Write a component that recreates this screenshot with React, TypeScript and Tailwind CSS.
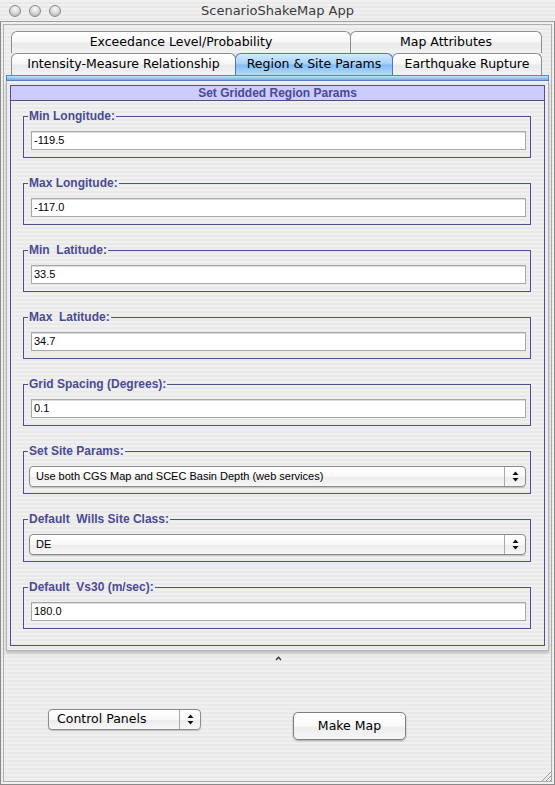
import React from 'react';

const stripe =
  'bg-[repeating-linear-gradient(180deg,#f0f0f0_0px,#f0f0f0_2px,#e9e9e9_2px,#e9e9e9_4px)]';

const Arrows: React.FC = () => (
  <svg width="7" height="11" viewBox="0 0 7 11">
    <polygon points="3.5,0.5 6.5,4 0.5,4" fill="#111" />
    <polygon points="0.5,7 6.5,7 3.5,10.5" fill="#111" />
  </svg>
);

const Tab: React.FC<{ label: string; w: string; selected?: boolean }> = ({ label, w, selected }) => (
  <div
    className={`${w} h-[22px] -ml-px first:ml-0 flex items-center justify-center rounded-t-[6px] border border-b-0 text-[12.5px] text-black font-['DejaVu_Sans',sans-serif] ${
      selected
        ? 'relative z-10 border-[#4a79bd] bg-[linear-gradient(180deg,#d3eafe_0%,#a5d0f8_48%,#7fbbf2_52%,#b5dbfc_100%)]'
        : 'border-[#8e8e8e] bg-[linear-gradient(180deg,#ffffff_0%,#f7f7f7_48%,#e9e9e9_52%,#f2f2f2_100%)]'
    }`}
  >
    {label}
  </div>
);

const TextRow: React.FC<{ label: string; value: string }> = ({ label, value }) => (
  <fieldset className="border border-[#4f4f8f] pl-[4px] pr-[4px] pt-[8px] pb-[7px] mx-0">
    <legend className="px-[1px] text-[12px] leading-[14px] font-bold text-[#4b4b93] whitespace-pre font-['Liberation_Sans',sans-serif]">
      {label}
    </legend>
    <div className="ml-[3px] h-[19px] bg-white border border-[#a8a8a8] shadow-[inset_0_1px_0_#dcdcdc] flex items-center pl-[2px] text-[11px] text-black font-['Liberation_Sans',sans-serif]">
      {value}
    </div>
  </fieldset>
);

const SelectRow: React.FC<{ label: string; value: string }> = ({ label, value }) => (
  <fieldset className="border border-[#4f4f8f] pl-[4px] pr-[4px] pt-[8px] pb-[6px] mx-0">
    <legend className="px-[1px] text-[12px] leading-[14px] font-bold text-[#4b4b93] whitespace-pre font-['Liberation_Sans',sans-serif]">
      {label}
    </legend>
    <div className="ml-[1px] h-[21px] flex rounded-[4px] border border-[#8c8c8c] shadow-[0_1px_1px_rgba(0,0,0,0.18)] bg-[linear-gradient(180deg,#ffffff_0%,#f8f8f8_50%,#ececec_55%,#f7f7f7_100%)] overflow-hidden">
      <div className="flex-1 flex items-center pl-[6px] text-[11px] text-black font-['Liberation_Sans',sans-serif]">
        {value}
      </div>
      <div className="w-[21px] border-l border-[#a9a9a9] flex items-center justify-center">
        <Arrows />
      </div>
    </div>
  </fieldset>
);

const App: React.FC = () => {
  return (
    <div className="relative w-[555px] h-[785px] bg-[#e9e9e9] flex flex-col overflow-hidden">
      {/* title bar */}
      <div className={`h-[22px] relative flex items-center border-b border-[#9d9d9d] ${stripe}`}>
        <div className="absolute left-[9px] top-[5px] flex gap-[8px]">
          {[0, 1, 2].map((i) => (
            <div
              key={i}
              className="w-[12px] h-[12px] rounded-full border border-[#8b8b8b] bg-[radial-gradient(circle_at_50%_30%,#fbfbfb_0%,#dcdcdc_45%,#a9a9a9_100%)]"
            />
          ))}
        </div>
        <div className="flex-1 text-center text-[13px] text-[#3c3c3c] font-['DejaVu_Sans',sans-serif]">
          ScenarioShakeMap App
        </div>
      </div>

      {/* window body */}
      <div className={`flex-1 border-x border-b border-[#8a8a8a] p-[2px] ${stripe}`}>
        <div className="h-full border border-[#b0b0b0] flex flex-col">
          <div className="px-[2px] pt-[6px]">
            {/* tabs */}
            <div className="px-[5px]">
              <div className="flex">
                <Tab label="Exceedance Level/Probability" w="w-[340px]" />
                <Tab label="Map Attributes" w="w-[192px]" />
              </div>
              <div className="flex">
                <Tab label="Intensity-Measure Relationship" w="w-[225px]" />
                <Tab label="Region & Site Params" w="w-[158px]" selected />
                <Tab label="Earthquake Rupture" w="w-[150px]" />
              </div>
            </div>
            <div className="h-[6px] border border-[#5286c6] bg-[linear-gradient(180deg,#c9e4fb_0%,#98c9f3_50%,#6eaeea_100%)]" />

            {/* tab panel */}
            <div
              className={`border-x border-b border-[#b3b3b3] px-[3px] pt-[4px] pb-[4px] shadow-[0_2px_3px_rgba(0,0,0,0.22)] ${stripe}`}
            >
              <div className="border border-[#4f4f8f]">
                <div className="h-[15px] bg-[#ccccff] border-b border-[#4f4f8f] flex items-center justify-center text-[12px] font-bold text-[#4b4b8e] font-['Liberation_Sans',sans-serif]">
                  Set Gridded Region Params
                </div>
                <div className="ml-[12px] mr-[13px] pt-[8px] pb-[16px] flex flex-col gap-[18px]">
                  <TextRow label="Min Longitude:" value="-119.5" />
                  <TextRow label="Max Longitude:" value="-117.0" />
                  <TextRow label="Min  Latitude:" value="33.5" />
                  <TextRow label="Max  Latitude:" value="34.7" />
                  <TextRow label="Grid Spacing (Degrees):" value="0.1" />
                  <SelectRow
                    label="Set Site Params:"
                    value="Use both CGS Map and SCEC Basin Depth (web services)"
                  />
                  <SelectRow label="Default  Wills Site Class:" value="DE" />
                  <TextRow label="Default  Vs30 (m/sec):" value="180.0" />
                </div>
              </div>
            </div>
          </div>

          {/* splitter caret */}
          <div className="h-[14px] flex items-center justify-center">
            <svg width="7" height="5" viewBox="0 0 7 5" className="ml-[1px]">
              <polyline points="1,4 3.5,1.2 6,4" fill="none" stroke="#333" strokeWidth="1.3" />
            </svg>
          </div>

          {/* bottom controls */}
          <div className="flex items-start pl-[44px] mt-[44px]">
            <div className="w-[153px] h-[21px] flex rounded-[4px] border border-[#8c8c8c] shadow-[0_1px_1px_rgba(0,0,0,0.2)] bg-[linear-gradient(180deg,#ffffff_0%,#f8f8f8_50%,#ececec_55%,#f7f7f7_100%)] overflow-hidden">
              <div className="flex-1 flex items-center pl-[8px] text-[12.5px] text-black font-['DejaVu_Sans',sans-serif]">
                Control Panels
              </div>
              <div className="w-[21px] border-l border-[#a9a9a9] flex items-center justify-center">
                <Arrows />
              </div>
            </div>
            <button className="ml-[92px] mt-[3px] w-[113px] h-[28px] rounded-[5px] border border-[#7e7e7e] shadow-[0_1px_2px_rgba(0,0,0,0.3)] bg-[linear-gradient(180deg,#ffffff_0%,#f9f9f9_50%,#ededed_55%,#f6f6f6_100%)] text-[12.5px] text-black font-['DejaVu_Sans',sans-serif]">
              Make Map
            </button>
          </div>
        </div>
      </div>

      {/* resize grip */}
      <svg width="14" height="14" viewBox="0 0 14 14" className="absolute right-[2px] bottom-[3px]">
        <line x1="13" y1="3" x2="3" y2="13" stroke="#9a9a9a" strokeWidth="1" />
        <line x1="13" y1="7" x2="7" y2="13" stroke="#9a9a9a" strokeWidth="1" />
        <line x1="13" y1="11" x2="11" y2="13" stroke="#9a9a9a" strokeWidth="1" />
      </svg>
    </div>
  );
};

export default App;
